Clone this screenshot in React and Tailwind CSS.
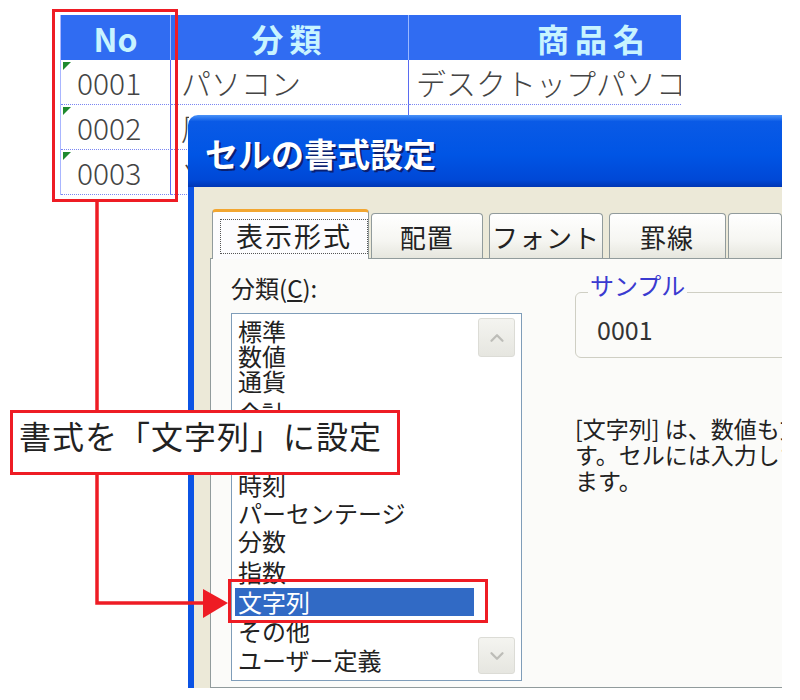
import { ChevronUp, ChevronDown } from 'lucide-react';

const FONT = "font-['Noto_Sans_CJK_JP','Noto_Sans',sans-serif]";

// rows 2 and 3 sit mostly under the dialog: only a sliver of the category shows
const rows = [
  { no: '0001', cat: 'パソコン', name: 'デスクトップパソコン', hidden: false },
  { no: '0002', cat: '周辺機器', name: '', hidden: true },
  { no: '0003', cat: 'ソフト', name: '', hidden: true },
];

// list rows: label + row height, to line up with the picture
const categories = [
  { label: '標準', h: 'h-[25px]' },
  { label: '数値', h: 'h-[25px]' },
  { label: '通貨', h: 'h-[25px]' },
  { label: '会計', h: 'h-[39px]' },
  { label: '日付', h: 'h-[39px]' },
  { label: '時刻', h: 'h-[28px]' },
  { label: 'パーセンテージ', h: 'h-[28px]' },
  { label: '分数', h: 'h-[28px]' },
  { label: '指数', h: 'h-[33px]' },
  { label: '文字列', h: 'h-[28px]', selected: true },
  { label: 'その他', h: 'h-[30px]' },
  { label: 'ユーザー定義', h: 'h-[28px]' },
];

const Sheet = () => (
  <div className="pt-[15px] pl-[60px]">
    <div className="w-[620px] grid grid-cols-[110px_238px_272px] border-l border-[#a9b6ff]">
      {/* Header */}
      <div className="h-[45px] bg-[#306cf2] border-r border-[#9ab8ff] flex items-center justify-center text-[32px] font-bold text-[#c8f4ff]">
        No
      </div>
      <div className="h-[45px] bg-[#306cf2] border-r border-[#9ab8ff] flex items-center justify-center text-[32px] font-bold tracking-[6px] text-[#c8f4ff]">
        分類
      </div>
      <div className="h-[45px] bg-[#306cf2] flex items-center justify-end pr-[30px] text-[32px] font-bold tracking-[6px] text-[#c8f4ff]">
        商品名
      </div>

      {rows.map((r) => (
        <div key={r.no} className="contents">
          <div className="relative h-[45px] border-b border-dotted border-[#7a86f2] shadow-[inset_-1px_0_0_#5b6df0] flex items-center pl-[16px] text-[30px] font-light text-[#444]">
            <span className="absolute left-[2px] top-[2px] w-0 h-0 border-t-[8px] border-t-[#1f8a2e] border-r-[8px] border-r-transparent" />
            {r.no}
          </div>
          <div className="h-[45px] border-b border-dotted border-[#7a86f2] shadow-[inset_-1px_0_0_#5b6df0] flex items-center pl-[10px] text-[30px] font-light text-[#444] whitespace-nowrap overflow-hidden">
            <span className={r.hidden ? 'w-[8px] overflow-hidden' : ''}>{r.cat}</span>
          </div>
          <div className="h-[45px] border-b border-dotted border-[#7a86f2] flex items-center pl-[7px] text-[30px] font-light text-[#444] whitespace-nowrap overflow-hidden">
            {r.name}
          </div>
        </div>
      ))}
    </div>
  </div>
);

const Tab = ({ label, width, active }) =>
  active ? (
    <div className={`${width} h-[50px] relative z-10 -mb-px bg-[#fcfcfe] border-x border-[#919b9c] border-t-[3px] border-t-[#f2a630] rounded-t-[4px] flex items-start pt-[7px] pl-[7px]`}>
      <div className="w-[148px] h-[35px] border border-dotted border-[#555] flex items-center justify-center text-[27px] text-[#222] tracking-[2px]">
        {label}
      </div>
    </div>
  ) : (
    <div className={`${width} h-[45px] bg-[linear-gradient(180deg,#ffffff_0%,#f6f6f2_60%,#e6e6de_100%)] border border-b-0 border-[#919b9c] rounded-t-[4px] flex items-center justify-center text-[26px] text-[#222] tracking-[1px]`}>
      {label}
    </div>
  );

const Dialog = () => (
  <div className={`absolute left-[188px] top-[115px] w-[594px] h-[573px] overflow-hidden rounded-tl-[10px] flex flex-col ${FONT}`}>
    {/* Title bar */}
    <div className="h-[72px] shrink-0 bg-[linear-gradient(180deg,#4a92f8_0%,#0a5ae6_9%,#0055e5_55%,#0048d6_90%,#0036b4_100%)] flex items-center pl-[17px] pt-[6px]">
      <span className="text-[33px] font-bold text-white [text-shadow:2px_2px_0_#0a1f70]">セルの書式設定</span>
    </div>

    <div className="flex-1 flex min-h-0">
      <div className="w-[6px] bg-[#0b53e4]" />
      <div className="flex-1 bg-[#ece9d8] pl-[16px] pt-[21px] flex flex-col min-w-0">
        {/* Tabs */}
        <div className="h-[50px] flex items-end pl-[2px]">
          <Tab label="表示形式" width="w-[166px]" active />
          <div className="w-[2px]" />
          <Tab label="配置" width="w-[125px]" />
          <div className="w-[7px]" />
          <Tab label="フォント" width="w-[128px]" />
          <div className="w-[6px]" />
          <Tab label="罫線" width="w-[131px]" />
          <div className="w-[3px]" />
          <Tab label="" width="w-[60px]" />
        </div>

        {/* Panel */}
        <div className="flex-1 bg-[#fbfbf9] border border-r-0 border-[#919b9c] flex">
          {/* Left column */}
          <div className="pl-[20px] w-[311px] shrink-0">
            <div className="mt-[12px] h-[34px] leading-[34px] text-[24px] text-[#222]">
              分類(<span className="underline underline-offset-2">C</span>):
            </div>
            <div className="mt-[8px] h-[368px] border border-[#7f9db9] bg-white flex">
              <div className="flex-1 pt-[4px]">
                {categories.map((c) => (
                  <div
                    key={c.label}
                    className={`${c.h} ml-[3px] w-[239px] pl-[3px] flex items-center text-[24px] leading-none whitespace-nowrap ${c.selected ? 'bg-[#316ac5] text-white' : 'text-[#222]'}`}
                  >
                    {c.label}
                  </div>
                ))}
              </div>
              <div className="w-[43px] pr-[6px] pt-[4px] pb-[6px] flex flex-col justify-between">
                <div className="h-[39px] rounded-[3px] border border-[#dcdcd6] bg-[linear-gradient(180deg,#f4f4f0,#e6e6e0)] flex items-center justify-center">
                  <ChevronUp className="w-[22px] h-[22px] text-[#bdbdb8]" strokeWidth={2.5} />
                </div>
                <div className="h-[37px] rounded-[3px] border border-[#dcdcd6] bg-[linear-gradient(180deg,#f4f4f0,#e6e6e0)] flex items-center justify-center">
                  <ChevronDown className="w-[22px] h-[22px] text-[#bdbdb8]" strokeWidth={2.5} />
                </div>
              </div>
            </div>
          </div>

          {/* Right column */}
          <div className="ml-[53px] flex-1 min-w-0">
            <div className="relative mt-[33px] w-[320px] h-[66px] border border-[#cfcfc4] rounded-[6px]">
              <span className="absolute left-[12px] -top-[20px] px-[2px] bg-[#fbfbf9] text-[24px] leading-[24px] text-[#3a3ad0]">
                サンプル
              </span>
              <div className="pl-[21px] pt-[21px] text-[25px] leading-[30px] text-[#333]">0001</div>
            </div>
            <div className="mt-[57px] text-[23px] leading-[26px] text-[#222] whitespace-nowrap">
              <div>[文字列] は、数値も文字列として扱われま</div>
              <div>す。セルには入力したとおりに表示され</div>
              <div>ます。</div>
            </div>
          </div>
        </div>
      </div>
    </div>
  </div>
);

export default function App() {
  return (
    <div className={`relative w-[800px] h-[700px] bg-white overflow-hidden ${FONT}`}>
      <Sheet />
      <Dialog />

      {/* Callout: red frame round the No column */}
      <div className="absolute left-[52px] top-[9px] w-[126px] h-[193px] border-[3px] border-[#ee1c24]" />

      {/* Connector lines and arrow */}
      <svg className="absolute left-0 top-0 pointer-events-none" width="800" height="700">
        <line x1="97" y1="201" x2="97" y2="412" stroke="#ee1c24" strokeWidth="3.5" />
        <polyline points="97,474 97,603 206,603" fill="none" stroke="#ee1c24" strokeWidth="3.5" />
        <polygon points="203,589 228,603 203,618" fill="#ee1c24" />
      </svg>

      {/* Callout label */}
      <div className="absolute left-[10px] top-[410px] w-[390px] h-[65px] border-[3px] border-[#ee1c24] bg-white pl-[6px] pt-[2px] text-[32px] leading-[40px] tracking-[1px] text-[#222] whitespace-nowrap">
        書式を「文字列」に設定
      </div>

      {/* Red frame round the selected item */}
      <div className="absolute left-[228px] top-[579px] w-[260px] h-[44px] border-[3px] border-[#ee1c24]" />
    </div>
  );
}
